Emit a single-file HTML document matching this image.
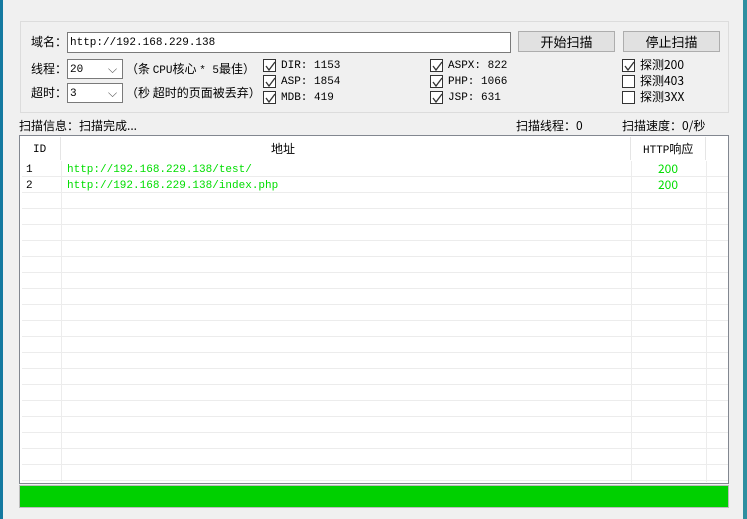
<!DOCTYPE html>
<html><head><meta charset="utf-8"><style>
*{margin:0;padding:0;box-sizing:border-box}
body{width:747px;height:519px;overflow:hidden;background:#f0f0f0;position:relative;font:12px "Noto Sans CJK SC","WenQuanYi Zen Hei",sans-serif;color:#000}
.a{position:absolute;white-space:nowrap;line-height:14px}
.m{font-family:"Liberation Mono",monospace;font-size:11px}
.box{position:absolute;border:1px solid #7a7a7a;background:#fff}
.btn{position:absolute;background:#e1e1e1;border:1px solid #adadad;text-align:center;line-height:19px;font-size:13px}
.cb{position:absolute;width:13px;height:13px;border:1px solid #333;background:#fff}
.cb svg{position:absolute;left:1px;top:1px}
.hl{position:absolute;left:22px;width:706px;height:1px;background:#ececec}
.vl{position:absolute;top:137px;width:1px;height:346px;background:#ececec}
.g{color:#00dd00}
</style></head><body>
<div style="position:absolute;left:0;top:0;width:3px;height:519px;background:#1479a0"></div>
<div style="position:absolute;left:743px;top:0;width:4px;height:519px;background:#2f8fa0"></div>
<div style="position:absolute;left:20px;top:21px;width:709px;height:92px;border:1px solid #dcdcdc"></div>
<div class="a" style="left:31px;top:35px">域名：</div>
<div class="box" style="left:67px;top:32px;width:444px;height:21px"><span class="a m" style="left:2px;top:3px">http://192.168.229.138</span></div>
<div class="btn" style="left:518px;top:31px;width:97px;height:21px">开始扫描</div>
<div class="btn" style="left:623px;top:31px;width:97px;height:21px">停止扫描</div>
<div class="a" style="left:31px;top:62px">线程：</div>
<div class="box" style="left:67px;top:59px;width:56px;height:20px"><span class="a m" style="left:2px;top:3px">20</span><span class="a" style="left:40px;top:2px;color:#555">⌵</span></div>
<div class="a" style="left:126px;top:62px">（条 <span class="m">CPU</span>核心 <span class="m">* 5</span>最佳）</div>
<div class="a" style="left:31px;top:86px">超时：</div>
<div class="box" style="left:67px;top:83px;width:56px;height:20px"><span class="a m" style="left:2px;top:3px">3</span><span class="a" style="left:40px;top:2px;color:#555">⌵</span></div>
<div class="a" style="left:126px;top:86px">（秒 超时的页面被丢弃）</div>
<div class="cb" style="left:263px;top:59px"><svg width="11" height="11"><path d="M1 5 L4 9 L10 1" stroke="#333" fill="none" stroke-width="1.3"/></svg></div>
<div class="a m" style="left:281px;top:59px">DIR: 1153</div>
<div class="cb" style="left:263px;top:75px"><svg width="11" height="11"><path d="M1 5 L4 9 L10 1" stroke="#333" fill="none" stroke-width="1.3"/></svg></div>
<div class="a m" style="left:281px;top:75px">ASP: 1854</div>
<div class="cb" style="left:263px;top:91px"><svg width="11" height="11"><path d="M1 5 L4 9 L10 1" stroke="#333" fill="none" stroke-width="1.3"/></svg></div>
<div class="a m" style="left:281px;top:91px">MDB: 419</div>
<div class="cb" style="left:430px;top:59px"><svg width="11" height="11"><path d="M1 5 L4 9 L10 1" stroke="#333" fill="none" stroke-width="1.3"/></svg></div>
<div class="a m" style="left:448px;top:59px">ASPX: 822</div>
<div class="cb" style="left:430px;top:75px"><svg width="11" height="11"><path d="M1 5 L4 9 L10 1" stroke="#333" fill="none" stroke-width="1.3"/></svg></div>
<div class="a m" style="left:448px;top:75px">PHP: 1066</div>
<div class="cb" style="left:430px;top:91px"><svg width="11" height="11"><path d="M1 5 L4 9 L10 1" stroke="#333" fill="none" stroke-width="1.3"/></svg></div>
<div class="a m" style="left:448px;top:91px">JSP: 631</div>
<div class="cb" style="left:622px;top:59px"><svg width="11" height="11"><path d="M1 5 L4 9 L10 1" stroke="#333" fill="none" stroke-width="1.3"/></svg></div>
<div class="a" style="left:640px;top:58px">探测200</div>
<div class="cb" style="left:622px;top:75px"></div>
<div class="a" style="left:640px;top:74px">探测403</div>
<div class="cb" style="left:622px;top:91px"></div>
<div class="a" style="left:640px;top:90px">探测3XX</div>
<div class="a" style="left:19px;top:119px">扫描信息：扫描完成...</div>
<div class="a" style="left:516px;top:119px">扫描线程：0</div>
<div class="a" style="left:622px;top:119px">扫描速度：0/秒</div>
<div style="position:absolute;left:19px;top:135px;width:710px;height:349px;border:1px solid #828790;background:#fff"></div>
<div style="position:absolute;left:60px;top:137px;width:1px;height:23px;background:#e5e5e5"></div>
<div style="position:absolute;left:630px;top:137px;width:1px;height:23px;background:#e5e5e5"></div>
<div style="position:absolute;left:705px;top:137px;width:1px;height:23px;background:#e5e5e5"></div>
<div class="vl" style="left:61px;top:161px;height:321px"></div>
<div class="vl" style="left:631px;top:161px;height:321px"></div>
<div class="vl" style="left:706px;top:161px;height:321px"></div>
<div class="a m" style="left:33px;top:143px">ID</div>
<div class="a" style="left:271px;top:142px">地址</div>
<div class="a" style="left:643px;top:142px"><span class="m">HTTP</span>响应</div>
<div class="a m" style="left:26px;top:163px">1</div>
<div class="a m g" style="left:67px;top:163px">http://192.168.229.138/test/</div>
<div class="a g" style="left:658px;top:162px">200</div>
<div class="a m" style="left:26px;top:179px">2</div>
<div class="a m g" style="left:67px;top:179px">http://192.168.229.138/index.php</div>
<div class="a g" style="left:658px;top:178px">200</div>
<div class="hl" style="top:176px"></div><div class="hl" style="top:192px"></div><div class="hl" style="top:208px"></div><div class="hl" style="top:224px"></div><div class="hl" style="top:240px"></div><div class="hl" style="top:256px"></div><div class="hl" style="top:272px"></div><div class="hl" style="top:288px"></div><div class="hl" style="top:304px"></div><div class="hl" style="top:320px"></div><div class="hl" style="top:336px"></div><div class="hl" style="top:352px"></div><div class="hl" style="top:368px"></div><div class="hl" style="top:384px"></div><div class="hl" style="top:400px"></div><div class="hl" style="top:416px"></div><div class="hl" style="top:432px"></div><div class="hl" style="top:448px"></div><div class="hl" style="top:464px"></div><div class="hl" style="top:480px"></div>
<div style="position:absolute;left:19px;top:485px;width:710px;height:23px;border:1px solid #bcbcbc;background:#00d000"></div>
</body></html>
